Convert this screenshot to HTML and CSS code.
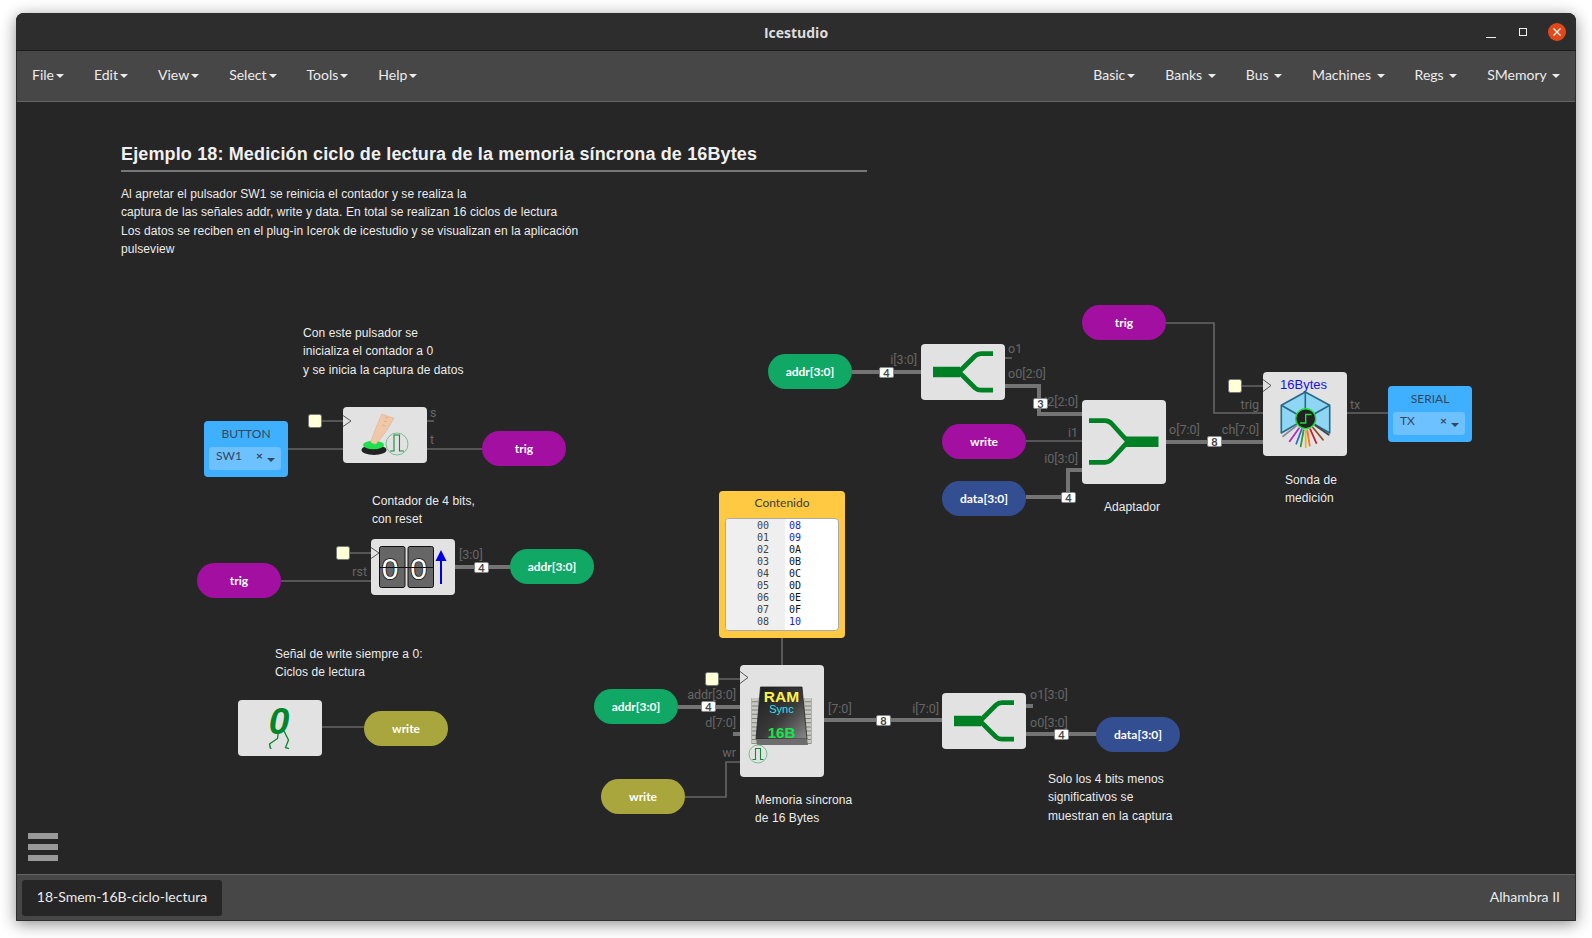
FILE: index.html

```html
<!DOCTYPE html>
<html lang="es">
<head>
  <meta charset="UTF-8" />
  <title>Icestudio</title>
  <link rel="stylesheet" href="styles.css">
</head>
<body>
  <div class="window">
    <header class="titlebar">
      <span class="app-name">Icestudio</span>
      <div class="controls">
        <span class="ctl-min"></span>
        <span class="ctl-max"></span>
        <span class="ctl-close">
          <svg width="18" height="18" viewBox="0 0 18 18"><path d="M5.5 5.5l7 7M12.5 5.5l-7 7" stroke="#fff" stroke-width="1.2"/></svg>
        </span>
      </div>
    </header>

    <nav class="menubar">
      <ul class="menu">
        <li>File<i class="caret"></i></li>
        <li>Edit<i class="caret"></i></li>
        <li>View<i class="caret"></i></li>
        <li>Select<i class="caret"></i></li>
        <li>Tools<i class="caret"></i></li>
        <li>Help<i class="caret"></i></li>
      </ul>
      <ul class="menu menu-right">
        <li>Basic<i class="caret"></i></li>
        <li>Banks <i class="caret"></i></li>
        <li>Bus <i class="caret"></i></li>
        <li>Machines <i class="caret"></i></li>
        <li>Regs <i class="caret"></i></li>
        <li>SMemory <i class="caret"></i></li>
      </ul>
    </nav>

    <main class="canvas">
      <!-- wires, port names and bus sizes: coordinates are window coordinates -->
      <svg class="wires" width="1560" height="772" viewBox="16 102 1560 772">
        <g class="wire">
          <path d="M322 421H343M427 421H434M288 449H343M427 449H482"/>
          <path d="M350 553H371M281 581H371"/>
          <path d="M322 727H364"/>
          <path d="M782 637V665M719 679H740M685 797H726V762H740"/>
          <path d="M1005 358H1012"/>
          <path d="M1026 441H1082"/>
          <path d="M1166 323H1214V413H1263M1242 386H1263M1347 413H1388"/>
        </g>
        <g class="bus">
          <path d="M455 567H510"/>
          <path d="M678 707H740M733 734H740M824 720H942"/>
          <path d="M1026 706H1033M1026 734H1097"/>
          <path d="M852 372H921M1005 386H1039V414H1082"/>
          <path d="M1026 497H1068V470H1082M1166 442H1263"/>
        </g>

        <g class="cream">
          <rect x="308.5" y="414.5" width="13" height="13" rx="2"/>
          <rect x="336.5" y="546.5" width="13" height="13" rx="2"/>
          <rect x="705.5" y="672.5" width="13" height="13" rx="2"/>
          <rect x="1228.5" y="379.5" width="13" height="13" rx="2"/>
        </g>

        <g class="port">
          <text x="430" y="417">s</text>
          <text x="430" y="444">t</text>
          <text x="367" y="576" text-anchor="end">rst</text>
          <text x="459" y="559">[3:0]</text>
          <text x="736" y="699" text-anchor="end">addr[3:0]</text>
          <text x="736" y="727" text-anchor="end">d[7:0]</text>
          <text x="736" y="757" text-anchor="end">wr</text>
          <text x="828" y="713">[7:0]</text>
          <text x="939" y="713" text-anchor="end">i[7:0]</text>
          <text x="1030" y="699">o1[3:0]</text>
          <text x="1030" y="727">o0[3:0]</text>
          <text x="917" y="364" text-anchor="end">i[3:0]</text>
          <text x="1008" y="353">o1</text>
          <text x="1008" y="378">o0[2:0]</text>
          <text x="1078" y="406" text-anchor="end">i2[2:0]</text>
          <text x="1078" y="437" text-anchor="end">i1</text>
          <text x="1078" y="463" text-anchor="end">i0[3:0]</text>
          <text x="1169" y="434">o[7:0]</text>
          <text x="1259" y="409" text-anchor="end">trig</text>
          <text x="1259" y="434" text-anchor="end">ch[7:0]</text>
          <text x="1350" y="409">tx</text>
        </g>

        <g class="size">
          <rect x="474.5" y="562.5" width="14" height="10" rx="1.5"/><text x="481.5" y="571.5">4</text>
          <rect x="701.5" y="701.5" width="14" height="10" rx="1.5"/><text x="708.5" y="710.5">4</text>
          <rect x="876.5" y="715.5" width="14" height="10" rx="1.5"/><text x="883.5" y="724.5">8</text>
          <rect x="1054.5" y="729.5" width="14" height="10" rx="1.5"/><text x="1061.5" y="738.5">4</text>
          <rect x="879.5" y="367.5" width="14" height="10" rx="1.5"/><text x="886.5" y="376.5">4</text>
          <rect x="1033.5" y="398.5" width="14" height="10" rx="1.5"/><text x="1040.5" y="407.5">3</text>
          <rect x="1061.5" y="492.5" width="14" height="10" rx="1.5"/><text x="1068.5" y="501.5">4</text>
          <rect x="1207.5" y="436.5" width="14" height="10" rx="1.5"/><text x="1214.5" y="445.5">8</text>
        </g>
      </svg>

      <h1 class="heading">Ejemplo 18: Medición ciclo de lectura de la memoria síncrona de 16Bytes</h1>
      <p class="note note-intro">Al apretar el pulsador SW1 se reinicia el contador y se realiza la<br>captura de las señales addr, write y data. En total se realizan 16 ciclos de lectura<br>Los datos se reciben en el plug-in Icerok de icestudio y se visualizan en la aplicación<br>pulseview</p>
      <p class="note note-pulsador">Con este pulsador se<br>inicializa el contador a 0<br>y se inicia la captura de datos</p>
      <p class="note note-contador">Contador de 4 bits,<br>con reset</p>
      <p class="note note-write">Señal de write siempre a 0:<br>Ciclos de lectura</p>
      <p class="note note-memoria">Memoria síncrona<br>de 16 Bytes</p>
      <p class="note note-solo">Solo los 4 bits menos<br>significativos se<br>muestran en la captura</p>
      <p class="note note-sonda">Sonda de<br>medición</p>
      <p class="note note-adaptador">Adaptador</p>

      <div class="io io-button">
        <div class="io-title">BUTTON</div>
        <div class="io-select"><span>SW1</span><b>×</b><i class="io-caret"></i></div>
      </div>
      <div class="io io-serial">
        <div class="io-title">SERIAL</div>
        <div class="io-select"><span>TX</span><b>×</b><i class="io-caret"></i></div>
      </div>

      <div class="block b-push">
        <svg width="84" height="56" viewBox="0 0 84 56">
          <path class="clk" d="M0 8.5L8 14L0 19.5"/>
          <ellipse cx="31" cy="43" rx="12.5" ry="5" fill="#222"/>
          <ellipse cx="30.5" cy="38" rx="10.5" ry="4.2" fill="#1fe04c"/>
          <path d="M38.7 7L51 11.3Q44 25 33 37Q30 37.5 27.7 35Q33 20 38.7 7Z" fill="#f0c8a8" stroke="#d8a888" stroke-width=".5"/>
          <path d="M42 10l3 1M41 14l3 1M39.5 18l3 1" stroke="#c89a7c" stroke-width=".6"/>
          <circle class="pulse-ring" cx="54" cy="37" r="11"/>
          <path class="pulse" d="M47 44H51V28H56.5V44H61"/>
        </svg>
      </div>

      <div class="block b-counter">
        <svg width="84" height="56" viewBox="0 0 84 56">
          <rect x="8.5" y="7.5" width="25.5" height="41" rx="2" fill="#666" stroke="#111"/>
          <rect x="37" y="7.5" width="25.5" height="41" rx="2" fill="#666" stroke="#111"/>
          <text class="flip" x="19.2" y="39.5">0</text>
          <text class="flip" x="47.5" y="39.5">0</text>
          <path d="M8 28.5H63" stroke="#111" stroke-width="1.2"/>
          <path class="clk" d="M0 8.5L8 14L0 19.5"/>
          <path d="M70 45V18" stroke="#0000e6" stroke-width="2"/>
          <path d="M64.5 22L70 11L75.5 22Z" fill="#0000e6"/>
        </svg>
      </div>

      <div class="block b-zero">
        <svg width="84" height="56" viewBox="0 0 84 56">
          <text class="zero" x="41" y="33.5">0</text>
          <path class="legs" d="M40.5 31L39.5 38.5L31.5 44L32.5 48.5M31.5 47.5L33.5 48.5M46 31L50.5 40L47.5 47.5L51 48.5"/>
        </svg>
      </div>

      <div class="memory">
        <div class="memory-title">Contenido</div>
        <div class="editor">
          <pre class="gutter">00
01
02
03
04
05
06
07
08</pre>
          <pre class="code"><span class="num">08</span>
<span class="num">09</span>
0A
0B
0C
0D
0E
0F
<span class="num">10</span></pre>
        </div>
      </div>

      <div class="block b-ram">
        <svg width="84" height="112" viewBox="0 0 84 112">
          <defs>
            <linearGradient id="chip" x1="0" y1="0" x2="1" y2="1">
              <stop offset="0" stop-color="#1d1d1d"/>
              <stop offset=".55" stop-color="#3a3a3a"/>
              <stop offset="1" stop-color="#8a8a8a"/>
            </linearGradient>
          </defs>
          <path class="clk" d="M0 6.5L8 12.5L0 18.5"/>
          <path class="pins-back" d="M15 33V79M68 33V79"/>
          <path class="pins" d="M15 33V79M68 33V79"/>
          <path d="M20.5 22H62L67 74H16Z" fill="url(#chip)" stroke="#222" stroke-width=".8"/>
          <path d="M16 74H67L68 80H17Z" fill="#6d6d6d"/>
          <text class="ram-t ram-big" x="41.5" y="36.5">RAM</text>
          <text class="ram-t ram-sync" x="41.5" y="48">Sync</text>
          <text class="ram-t ram-16" x="41.5" y="73">16B</text>
          <circle class="pulse-ring" cx="18" cy="89" r="9"/>
          <path class="pulse" d="M12.5 94.5H15.5V83.5H20.5V94.5H23.5"/>
        </svg>
      </div>

      <div class="block b-split1">
        <svg width="84" height="56" viewBox="0 0 84 56">
          <path class="green-fat" d="M12 28H39"/>
          <path class="green-arm" d="M38 28L54 12Q56.5 9.7 60 9.7H72M38 28L54 44Q56.5 46.2 60 46.2H72"/>
        </svg>
      </div>

      <div class="block b-split2">
        <svg width="84" height="56" viewBox="0 0 84 56">
          <path class="green-fat" d="M12 28H39"/>
          <path class="green-arm" d="M38 28L54 12Q56.5 9.7 60 9.7H72M38 28L54 44Q56.5 46.2 60 46.2H72"/>
        </svg>
      </div>

      <div class="block b-adapter">
        <svg width="84" height="84" viewBox="0 0 84 84">
          <path class="green-fat" d="M44 41.7H76.5"/>
          <path class="green-arm" d="M7 20.7H23Q27 20.7 30 24L46 41.7L30 59Q27 62.3 23 62.3H7"/>
        </svg>
      </div>

      <div class="block b-sonda">
        <svg width="84" height="84" viewBox="0 0 84 84">
          <path class="clk" d="M0 7.5L8 13.5L0 19.5"/>
          <text class="sonda-t" x="40.5" y="17">16Bytes</text>
          <path d="M42.3 20L66.7 33.3V61L42.3 47L18.3 61V33.3Z" fill="#8ed6f4" stroke="#256a88" stroke-width="1.6" stroke-linejoin="round"/>
          <path d="M42.3 20V47M18.3 33.3L42.3 47L66.7 33.3" fill="none" stroke="#256a88" stroke-width="1.6"/>
          <g class="rays">
            <path d="M33.2 54L20 64.3" stroke="#8b8b9b"/>
            <path d="M36 56.2L26.7 69.3" stroke="#b02cc4"/>
            <path d="M38.7 57.2L33.3 71.7" stroke="#2a6cc8"/>
            <path d="M40.6 58.3L37.7 74.3" stroke="#2a9a3c"/>
            <path d="M42.7 58.7V75.3" stroke="#e8b824"/>
            <path d="M44.4 58.5L46.7 73.7" stroke="#f07838"/>
            <path d="M47.2 57.2L53.3 71" stroke="#c41e2c"/>
            <path d="M49.9 55.5L60 67.7" stroke="#8a5028"/>
            <path d="M52.4 53.4L65.7 62.7" stroke="#444"/>
          </g>
          <circle cx="42.7" cy="46.7" r="10" fill="#222" stroke="#1fdc3c" stroke-width="1.4"/>
          <path d="M37 51H42.7V42.5H48.5" fill="none" stroke="#1fdc3c" stroke-width="1.4"/>
        </svg>
      </div>

      <div class="pill purple p-trig1">trig</div>
      <div class="pill purple p-trig2">trig</div>
      <div class="pill purple p-trig3">trig</div>
      <div class="pill purple p-write3">write</div>
      <div class="pill green p-addr1">addr[3:0]</div>
      <div class="pill green p-addr2">addr[3:0]</div>
      <div class="pill green p-addr3">addr[3:0]</div>
      <div class="pill olive p-write1">write</div>
      <div class="pill olive p-write2">write</div>
      <div class="pill navy p-data1">data[3:0]</div>
      <div class="pill navy p-data2">data[3:0]</div>

      <div class="hamburger"><span></span><span></span><span></span></div>
    </main>

    <footer class="statusbar">
      <div class="tab">18-Smem-16B-ciclo-lectura</div>
      <div class="board">Alhambra II</div>
    </footer>
  </div>
</body>
</html>
```

FILE: styles.css

```css
html, body {
  margin: 0;
  padding: 0;
  background: #fff;
  height: 938px;
  overflow: hidden;
}
body {
  font-family: Lato, Arial, sans-serif;
}
p, h1, pre, ul {
  margin: 0;
  padding: 0;
}

.window {
  position: absolute;
  left: 16px;
  top: 13px;
  width: 1560px;
  height: 908px;
  display: flex;
  flex-direction: column;
  border-radius: 8px 8px 0 0;
  background: #262626;
  box-shadow: 0 3px 16px rgba(0, 0, 0, .45);
  outline: 1px solid #2e2e2e;
  outline-offset: -1px;
  overflow: hidden;
}

/* title bar */
.titlebar {
  height: 37px;
  flex: none;
  position: relative;
  display: flex;
  align-items: center;
  justify-content: center;
  background: #2d2d2d;
  border-bottom: 1px solid #1b1b1b;
}
.app-name {
  padding-top: 1px;
  font-family: "Open Sans", sans-serif;
  font-weight: 700;
  font-size: 14px;
  color: #dedede;
}
.controls {
  position: absolute;
  right: 10px;
  top: 10px;
  display: flex;
  align-items: center;
}
.ctl-min {
  width: 10px;
  height: 1px;
  margin: 10px 23px 0 0;
  background: #eee;
}
.ctl-max {
  width: 6px;
  height: 6px;
  margin-right: 21px;
  border: 1px solid #eee;
}
.ctl-close {
  width: 18px;
  height: 18px;
  border-radius: 50%;
  background: #e2491a;
}
.ctl-close svg {
  display: block;
}

/* menu bar */
.menubar {
  height: 50px;
  flex: none;
  display: flex;
  justify-content: space-between;
  background: #474747;
  border-bottom: 1px solid #666;
  color: #ececec;
  font-size: 14px;
}
.menu {
  list-style: none;
  display: flex;
  padding-left: 1px;
}
.menu li {
  padding: 0 15px;
  line-height: 48px;
}
.menu-right {
  padding-left: 0;
  padding-right: 1px;
}
.caret {
  display: inline-block;
  margin-left: 2px;
  vertical-align: middle;
  border-top: 4px solid #ececec;
  border-left: 4px solid transparent;
  border-right: 4px solid transparent;
}

/* canvas */
.canvas {
  flex: 1;
  position: relative;
  background: #262626;
}
.wires {
  position: absolute;
  left: 0;
  top: 0;
}
.wire path {
  fill: none;
  stroke: #666;
  stroke-width: 1.6;
}
.bus path {
  fill: none;
  stroke: #747474;
  stroke-width: 4;
}
.cream rect {
  fill: #ffffd8;
  stroke: #777;
  stroke-width: 1;
}
.port text {
  font-family: Roboto, sans-serif;
  font-size: 12.5px;
  fill: #666;
}
.size rect {
  fill: #fff;
  stroke: #888;
  stroke-width: 1;
}
.size text {
  font-family: Lato, sans-serif;
  font-weight: 700;
  font-size: 11px;
  text-anchor: middle;
  fill: #444;
}

.heading {
  position: absolute;
  left: 105px;
  top: 41px;
  width: 746px;
  height: 27px;
  font-family: "Liberation Sans", Arial, sans-serif;
  font-size: 18px;
  font-weight: 700;
  line-height: 22px;
  letter-spacing: .14px;
  color: #f0f0f0;
  border-bottom: 2px solid #777;
}
.note {
  position: absolute;
  font-family: "Liberation Sans", Arial, sans-serif;
  font-size: 12px;
  line-height: 18.4px;
  letter-spacing: .08px;
  color: #ececec;
  white-space: nowrap;
}
.note-intro { left: 105px; top: 83px; }
.note-pulsador { left: 287px; top: 222px; }
.note-contador { left: 356px; top: 390px; }
.note-write { left: 259px; top: 543px; }
.note-memoria { left: 739px; top: 689px; }
.note-solo { left: 1032px; top: 668px; }
.note-sonda { left: 1269px; top: 369px; }
.note-adaptador { left: 1088px; top: 396px; }

/* blue input/output blocks */
.io {
  position: absolute;
  box-sizing: border-box;
  width: 84px;
  height: 56px;
  padding: 5px 7px 0 5px;
  border-radius: 4px;
  background: #3fb0ff;
  color: #33475b;
  font-size: 12px;
}
.io-title {
  height: 21px;
  line-height: 15px;
  text-align: center;
  margin-right: -2px;
}
.io-select {
  position: relative;
  height: 23px;
  padding-left: 7px;
  border-radius: 3px;
  background: #6ec1ff;
  line-height: 18px;
}
.io-select b {
  position: absolute;
  right: 18px;
  top: 0;
  font-size: 12px;
}
.io-caret {
  position: absolute;
  right: 6px;
  top: 11px;
  border-top: 4px solid #33475b;
  border-left: 4px solid transparent;
  border-right: 4px solid transparent;
}
.io-button { left: 188px; top: 319px; }
.io-serial { left: 1372px; top: 284px; }

/* grey blocks */
.block {
  position: absolute;
  width: 84px;
  height: 56px;
  border-radius: 4px;
  background: #e2e2e2;
}
.block svg {
  display: block;
}
.b-push { left: 327px; top: 305px; }
.b-counter { left: 355px; top: 437px; }
.b-zero { left: 222px; top: 598px; }
.b-ram { left: 724px; top: 563px; height: 112px; }
.b-split1 { left: 905px; top: 242px; }
.b-split2 { left: 926px; top: 591px; }
.b-adapter { left: 1066px; top: 298px; height: 84px; }
.b-sonda { left: 1247px; top: 270px; height: 84px; }

.clk {
  fill: #e2e2e2;
  stroke: #555;
  stroke-width: 1;
}
.pulse-ring {
  fill: none;
  stroke: #78c08c;
  stroke-width: 1;
}
.pulse {
  fill: none;
  stroke: #17853a;
  stroke-width: 1.1;
}
.flip {
  font-family: "Liberation Sans", sans-serif;
  font-size: 30px;
  text-anchor: middle;
  fill: #fff;
  stroke: #111;
  stroke-width: 1.6;
  paint-order: stroke;
}
.zero {
  font-family: "Liberation Sans", sans-serif;
  font-size: 37px;
  font-weight: 700;
  font-style: italic;
  text-anchor: middle;
  fill: #00872a;
}
.legs {
  fill: none;
  stroke: #00872a;
  stroke-width: 1.3;
}
.pins-back {
  fill: none;
  stroke: #7f7f7f;
  stroke-width: 7;
}
.pins {
  fill: none;
  stroke: #c8c8c0;
  stroke-width: 6;
  stroke-dasharray: 3.2 1;
}
.ram-t {
  font-family: "Liberation Sans", sans-serif;
  font-weight: 700;
  text-anchor: middle;
}
.ram-big { font-size: 15.5px; fill: #fff04a; }
.ram-sync { font-size: 11px; fill: #27e8f2; font-weight: 400; }
.ram-16 { font-size: 15px; fill: #17e84a; }
.sonda-t {
  font-family: "Liberation Sans", sans-serif;
  font-size: 13px;
  text-anchor: middle;
  fill: #1414e6;
}
.rays path {
  stroke-width: 1.8;
  stroke-linecap: round;
}
.green-fat {
  fill: none;
  stroke: #008024;
  stroke-width: 10.5;
}
.green-arm {
  fill: none;
  stroke: #008024;
  stroke-width: 4.7;
}

/* memory */
.memory {
  position: absolute;
  left: 703px;
  top: 389px;
  box-sizing: border-box;
  width: 126px;
  height: 147px;
  padding: 0 6px;
  border-radius: 4px;
  background: #ffca42;
}
.memory-title {
  height: 27px;
  line-height: 23px;
  text-align: center;
  font-size: 12px;
  color: #3d3d3d;
}
.editor {
  display: flex;
  height: 113px;
  box-sizing: border-box;
  border: 1px solid #aaa;
  border-radius: 4px;
  overflow: hidden;
  background: #fff;
}
.editor pre {
  padding-top: 1px;
  font-family: "DejaVu Sans Mono", monospace;
  font-size: 10px;
  line-height: 12px;
}
.gutter {
  box-sizing: border-box;
  width: 59px;
  padding-left: 31px;
  background: #efefef;
  color: #444;
}
.code {
  padding-left: 4px;
  color: #111;
}
.num {
  color: #1a1ad0;
}

/* pills */
.pill {
  position: absolute;
  width: 84px;
  height: 35px;
  border-radius: 18px;
  text-align: center;
  line-height: 35px;
  font-size: 12px;
  font-weight: 700;
  color: #fff;
}
.purple { background: #a30fa0; }
.green { background: #10a864; }
.olive { background: #a9a63d; }
.navy { background: #344e92; }
.p-trig1 { left: 466px; top: 329px; }
.p-trig2 { left: 181px; top: 461px; }
.p-trig3 { left: 1066px; top: 203px; }
.p-write3 { left: 926px; top: 322px; }
.p-addr1 { left: 494px; top: 447px; }
.p-addr2 { left: 578px; top: 587px; }
.p-addr3 { left: 752px; top: 252px; }
.p-write1 { left: 348px; top: 609px; }
.p-write2 { left: 585px; top: 677px; }
.p-data1 { left: 926px; top: 379px; }
.p-data2 { left: 1080px; top: 615px; }

.hamburger {
  position: absolute;
  left: 12px;
  top: 731px;
  display: flex;
  flex-direction: column;
  gap: 5px;
}
.hamburger span {
  width: 30px;
  height: 6px;
  background: #999;
}

/* status bar */
.statusbar {
  height: 47px;
  flex: none;
  box-sizing: border-box;
  display: flex;
  align-items: center;
  justify-content: space-between;
  padding: 0 16px 0 6px;
  background: #474747;
  border-top: 1px solid #666;
  border-bottom: 1px solid #666;
  color: #ececec;
  font-size: 14px;
}
.tab {
  width: 200px;
  height: 36px;
  line-height: 34px;
  text-align: center;
  border-radius: 3px;
  background: #262626;
}
.board {
  padding-bottom: 2px;
}
```
